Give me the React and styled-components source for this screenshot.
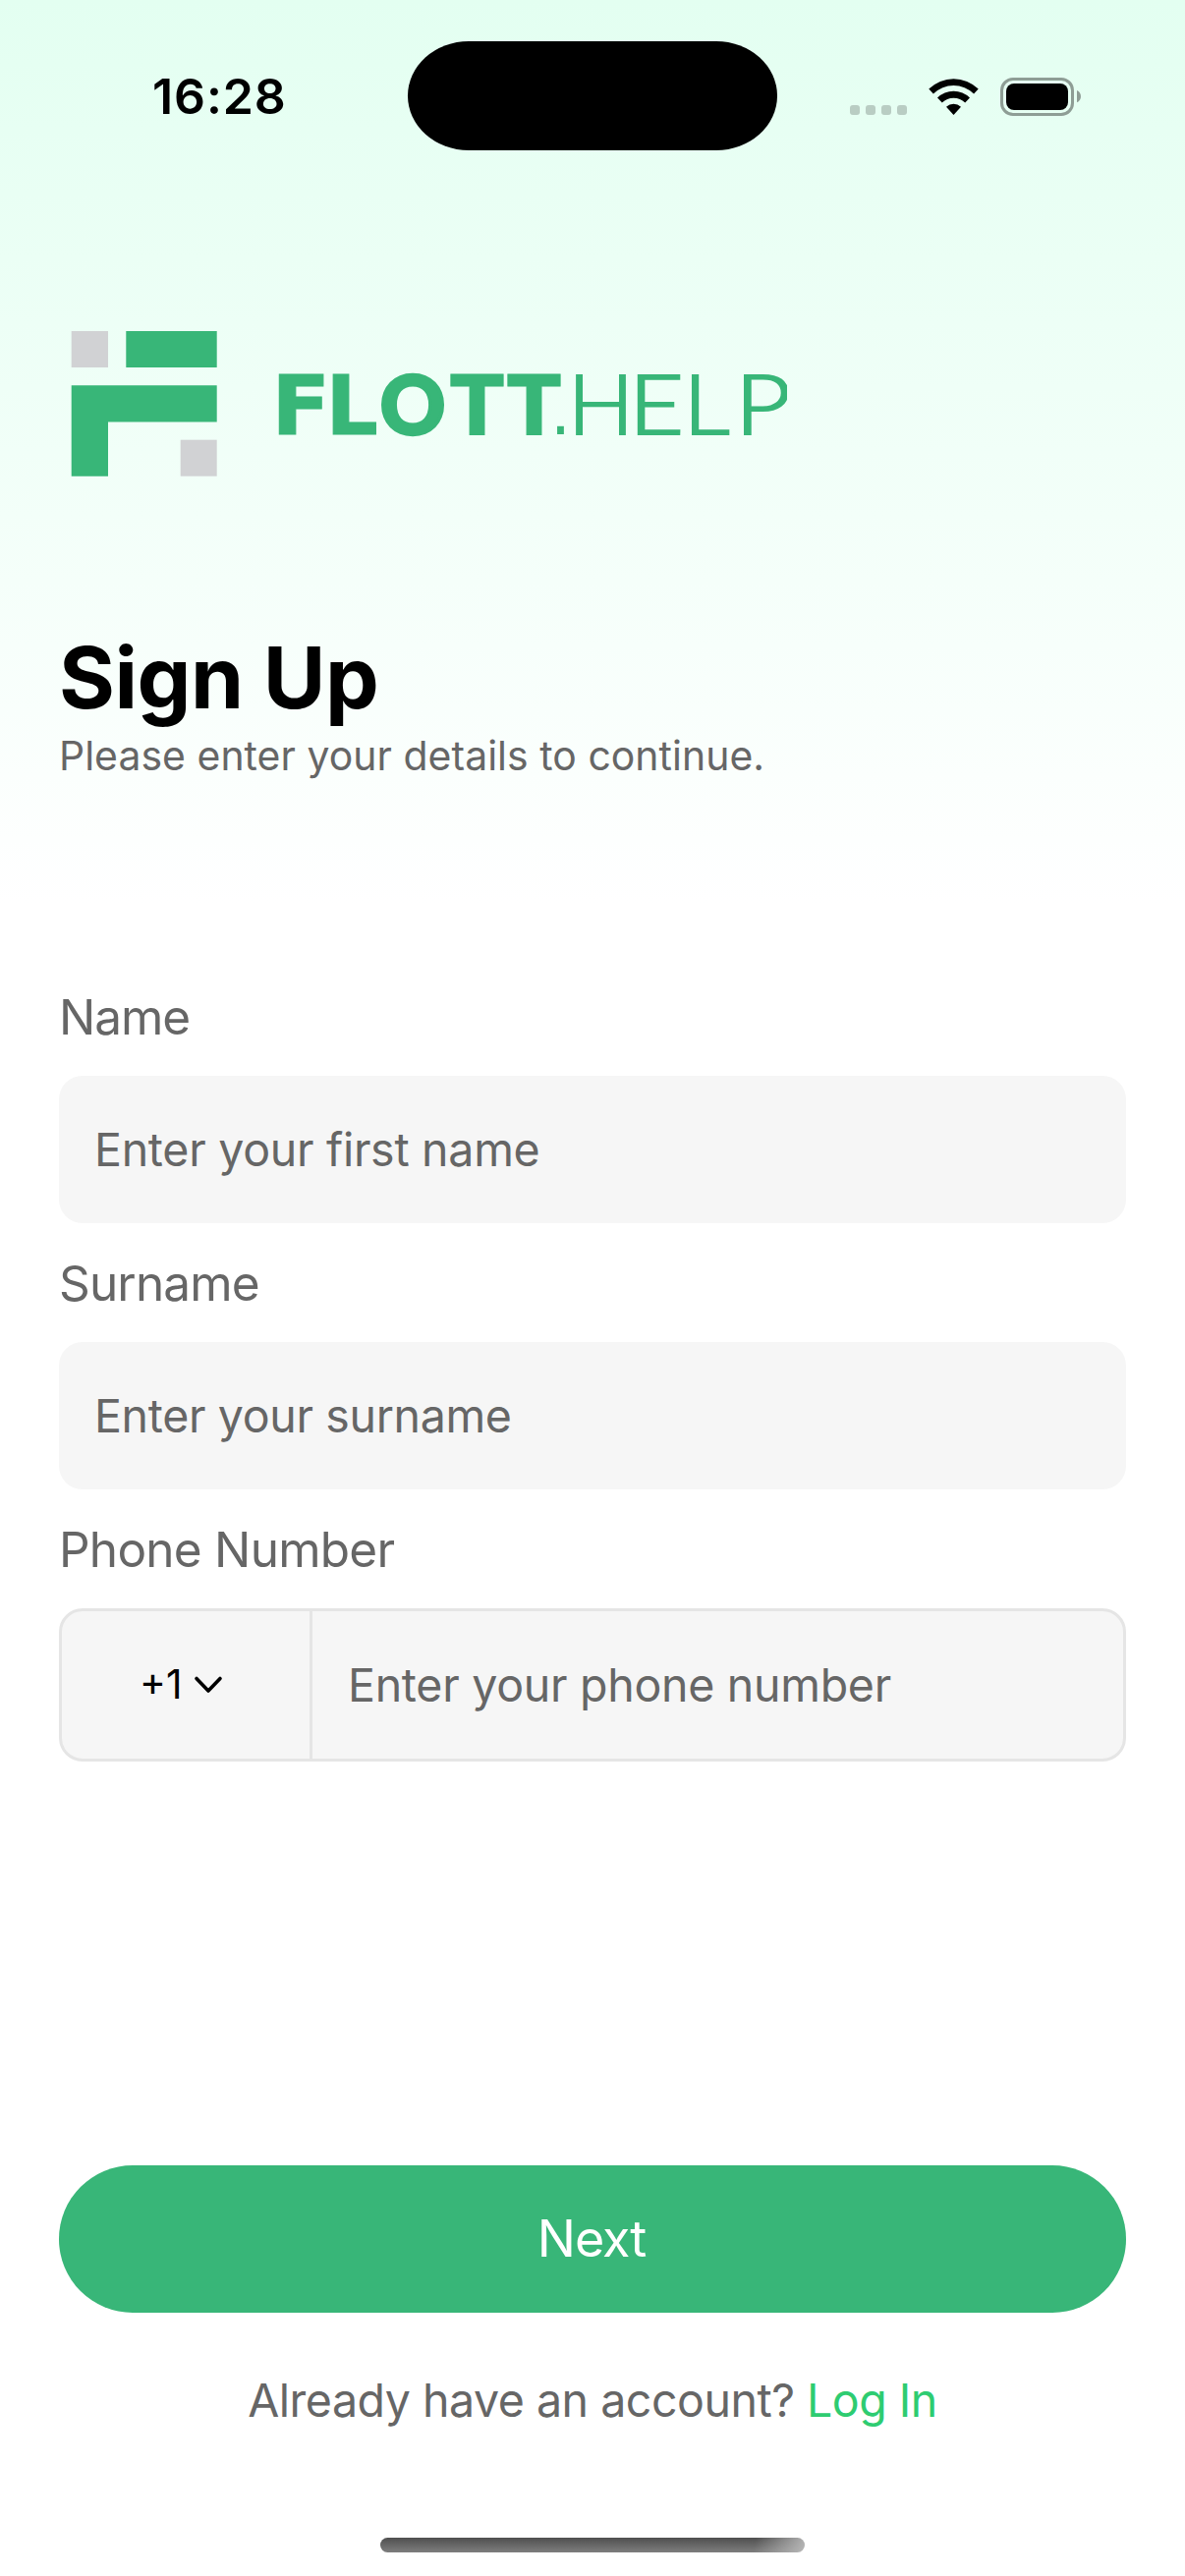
import React from "react";
import styled, { createGlobalStyle } from "styled-components";

const GlobalStyle = createGlobalStyle`
  * { box-sizing: border-box; }
  body { margin: 0; background: #fff; }
`;

const Screen = styled.main`
  width: 1206px;
  height: 2622px;
  display: flex;
  flex-direction: column;
  overflow: hidden;
  font-family: Inter, "Liberation Sans", sans-serif;
  background: linear-gradient(180deg, #e3fff1 0, #ffffff 920px) #fff;
`;

const Text = styled.span`
  display: block;
  margin: 0;
  white-space: pre;
  font-size: ${(p) => p.$size}px;
  line-height: ${(p) => p.$line || p.$size}px;
  letter-spacing: ${(p) => p.$track || 0}px;
  font-weight: ${(p) => p.$weight || 400};
  color: ${(p) => p.$color || "#666"};
`;

const StatusBar = styled.header`
  display: flex;
  align-items: center;
  height: 111px;
  margin-top: 42px;
`;

const Clock = styled.div`
  width: 415px;
  padding: 1px 0 0 155px;
`;

const Island = styled.div`
  width: 376px;
  height: 111px;
  border-radius: 62px / 55.5px;
  background: #000;
`;

const StatusIcons = styled.svg`
  margin-left: 72px;
`;

const Content = styled.div`
  display: flex;
  flex-direction: column;
  padding: 0 60px;
`;

const Logo = styled.svg`
  display: block;
  margin-top: 184px;
`;

const BoldGlyph = styled.tspan`
  font: 700 83.6px "DejaVu Sans", sans-serif;
  stroke: #38b678;
  stroke-width: 1px;
`;

const RoundGlyph = styled.tspan`
  font: 900 81.5px Lato, sans-serif;
  stroke: #38b678;
  stroke-width: 3.4px;
`;

const DotGlyph = styled.tspan`
  font: 400 66px "DejaVu Sans", sans-serif;
`;

const LightGlyph = styled.tspan`
  font: 300 84.4px Lato, sans-serif;
  stroke: #38b678;
  stroke-width: 2.2px;
`;

const Heading = styled.div`
  margin: 151px 0 211px;
`;

const Form = styled.div`
  display: flex;
  flex-direction: column;
  gap: 31px;
`;

const Field = styled.div`
  display: flex;
  flex-direction: column;
  gap: 30px;
`;

const InputBox = styled.div`
  display: flex;
  align-items: center;
  height: 150px;
  padding-left: 36px;
  border-radius: 24px;
  background: #f6f6f6;
`;

const PhoneBox = styled.div`
  display: flex;
  height: 156px;
  border: 3px solid #e5e5e5;
  border-radius: 24px;
  background: #f6f6f6;
`;

const CountryCode = styled.div`
  display: flex;
  align-items: center;
  gap: 12px;
  width: 255px;
  padding-left: 79px;
  border-right: 3px solid #e5e5e5;
`;

const PhoneValue = styled.div`
  display: flex;
  align-items: center;
  padding-left: 36px;
`;

const NextButton = styled.button`
  display: flex;
  align-items: center;
  justify-content: center;
  height: 150px;
  margin-top: 411px;
  padding: 0 2px 0 0;
  border: 0;
  border-radius: 75px;
  background: #38b678;
  font-family: inherit;
`;

const Footer = styled.div`
  display: flex;
  justify-content: center;
  margin-top: 60px;
`;

const HomeIndicator = styled.div`
  width: 432px;
  height: 15px;
  margin: 111px auto 0;
  border-radius: 8px;
  background:
    linear-gradient(100deg, rgba(190, 190, 190, 0) 88%, rgba(190, 190, 190, 0.9) 100%),
    linear-gradient(180deg, #4f4f4f, #7e7e7e);
`;

const fields = [
  { label: "Name", labelTrack: -1.1, hint: "Enter your first name", track: -0.28 },
  { label: "Surname", labelTrack: -0.85, hint: "Enter your surname", track: -0.34 },
];

export default function App() {
  return (
    <Screen>
      <GlobalStyle />
      <StatusBar>
        <Clock>
          <Text $size={50} $weight={600} $color="#000" $track={0.9}>16:28</Text>
        </Clock>
        <Island />
        <StatusIcons width="240" height="42" viewBox="863 76 240 42">
          {[865, 881, 897, 913].map((x) => (
            <rect key={x} x={x} y="106" width="10" height="10" rx="3" fill="#b9cdc3" />
          ))}
          <path d="M945.3 89.5a36 36 0 0 1 50.4 0l-4.6 5a29.500 29.500 0 0 0-41.200 0z" />
          <path d="M954 98.600a23.500 23.500 0 0 1 33 0l-4.800 5a16.600 16.600 0 0 0-23.400 0z" />
          <path d="M963 107.700a11.300 11.300 0 0 1 15 0l-7.500 8.300z" />
          <rect x="1019.500" y="79.500" width="72" height="36" rx="11.500" fill="none" stroke="#8e9d95" strokeWidth="3" />
          <rect x="1024" y="84" width="63" height="27" rx="8" />
          <path d="M1096 91c5.300 2.300 5.300 10 0 12.300z" fill="#8e9d95" />
        </StatusIcons>
      </StatusBar>

      <Content>
        <Logo width="741" height="148" viewBox="60 337 741 148">
          <g fill="#d1d2d4">
            <rect x="72.700" y="337" width="37.300" height="37" />
            <rect x="183.700" y="447.700" width="37" height="37" />
          </g>
          <g fill="#38b678">
            <rect x="128.300" y="337" width="92.400" height="37" />
            <path d="M72.700 392.200H220.700V429.400H110V484.700H72.700z" />
            <text y="441.600">
              <BoldGlyph x="276.200" textLength="60" lengthAdjust="spacingAndGlyphs">F</BoldGlyph>
              <BoldGlyph x="331.500">L</BoldGlyph>
              <RoundGlyph x="387">O</RoundGlyph>
              <BoldGlyph x="458.500" textLength="54" lengthAdjust="spacingAndGlyphs">T</BoldGlyph>
              <BoldGlyph x="516.500" textLength="54" lengthAdjust="spacingAndGlyphs">T</BoldGlyph>
              <DotGlyph x="560">.</DotGlyph>
              <LightGlyph x="578" textLength="67" lengthAdjust="spacingAndGlyphs">H</LightGlyph>
              <LightGlyph x="640" textLength="56" lengthAdjust="spacingAndGlyphs">E</LightGlyph>
              <LightGlyph x="695.500" textLength="47" lengthAdjust="spacingAndGlyphs">L</LightGlyph>
              <LightGlyph x="748" textLength="57" lengthAdjust="spacingAndGlyphs">P</LightGlyph>
            </text>
          </g>
        </Logo>

        <Heading>
          <Text as="h1" $size={87} $line={108} $weight={700} $color="#000" $track={-0.5}>
            Sign Up
          </Text>
          <Text $size={40.9} $line={50} $track={0.05}>Please enter your details to continue.</Text>
        </Heading>

        <Form>
          {fields.map((f) => (
            <Field key={f.label}>
              <Text $size={49.5} $line={60} $track={f.labelTrack}>{f.label}</Text>
              <InputBox>
                <Text $size={46.5} $line={58} $track={f.track}>{f.hint}</Text>
              </InputBox>
            </Field>
          ))}
          <Field>
            <Text $size={49.5} $line={60} $track={-0.75}>Phone Number</Text>
            <PhoneBox>
              <CountryCode>
                <Text $size={40.7} $line={50} $color="#000">+1</Text>
                <svg width="30" height="20" viewBox="0 0 30 20" fill="none" stroke="#000" strokeWidth="3.600" strokeLinecap="round" strokeLinejoin="round">
                  <path d="M3 3.500L15 16L27 3.500" />
                </svg>
              </CountryCode>
              <PhoneValue>
                <Text $size={46.5} $line={58} $track={-0.28}>Enter your phone number</Text>
              </PhoneValue>
            </PhoneBox>
          </Field>
        </Form>

        <NextButton>
          <Text $size={52} $line={64} $color="#fff" $track={-1.1}>Next</Text>
        </NextButton>
        <Footer>
          <Text $size={46.5} $line={58} $track={-0.48}>Already have an account? </Text>
          <Text $size={46.5} $line={58} $track={-0.5} $color="#2ecc71">Log In</Text>
        </Footer>
      </Content>
      <HomeIndicator />
    </Screen>
  );
}
